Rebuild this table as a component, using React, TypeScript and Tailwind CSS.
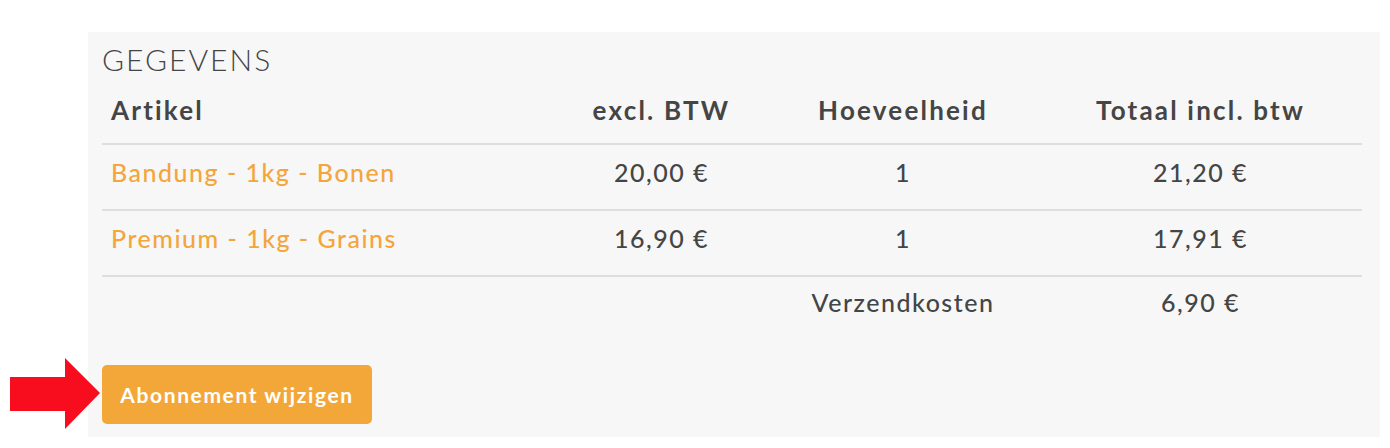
const rows = [
  { name: 'Bandung - 1kg - Bonen', price: '20,00 €', qty: '1', total: '21,20 €' },
  { name: 'Premium - 1kg - Grains', price: '16,90 €', qty: '1', total: '17,91 €' },
]

const cols = 'grid grid-cols-[454px_211px_272px_323px]'

export default function App() {
  return (
    <div className="w-[1390px] h-[448px] bg-white pt-[32px] pl-[88px] font-['Lato',sans-serif] text-[#454545]">
      <div className="w-[1292px] h-[405px] bg-[#f7f7f7] px-[14px] pt-[7px]">
        <h2 className="h-[40px] text-[30px] font-light leading-[40px] tracking-[2px] text-[#454545]">GEGEVENS</h2>

        <div className="w-[1260px] text-[25px] tracking-[1.5px]">
          <div className={`${cols} h-[66px] items-center border-b-2 border-[#dedede] pb-[2px] text-[26px] font-bold tracking-[2.2px]`}>
            <div className="pl-[9px]">Artikel</div>
            <div className="text-center">excl. BTW</div>
            <div className="text-center">Hoeveelheid</div>
            <div className="text-center">Totaal incl. btw</div>
          </div>

          {rows.map((r) => (
            <div key={r.name} className={`${cols} h-[66px] items-center border-b-2 border-[#dedede] pb-[8px] font-medium`}>
              <div className="pl-[9px] text-[#f4a53c]">{r.name}</div>
              <div className="text-center">{r.price}</div>
              <div className="text-center">{r.qty}</div>
              <div className="text-center">{r.total}</div>
            </div>
          ))}

          <div className={`${cols} h-[52px] items-center font-medium`}>
            <div />
            <div />
            <div className="text-center">Verzendkosten</div>
            <div className="text-center">6,90 €</div>
          </div>
        </div>

        <div className="relative mt-[36px]">
          <svg className="absolute left-[-92px] top-[-7px]" width="92" height="72" viewBox="0 0 92 72">
            <polygon points="0,19 55,19 55,0 90,35 55,71 55,53 0,53" fill="#f80d1f" />
          </svg>
          <button className="h-[59px] w-[270px] rounded-[5px] bg-[#f4a739] text-[21px] font-bold tracking-[1.6px] text-white">
            Abonnement wijzigen
          </button>
        </div>
      </div>
    </div>
  )
}
